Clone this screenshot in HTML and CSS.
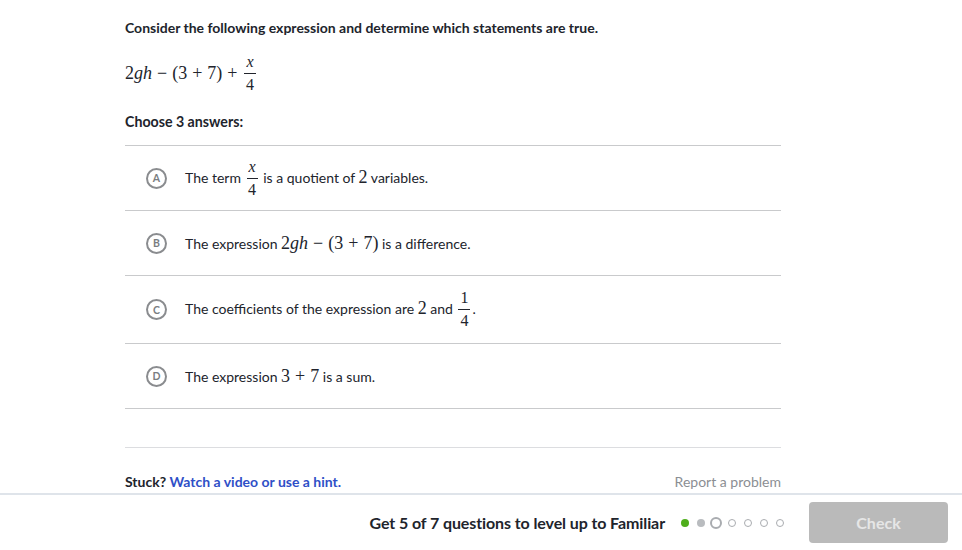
FILE: index.html
```html
<!DOCTYPE html>
<html>
<head>
<meta charset="utf-8">
<link rel="stylesheet" href="styles.css">
</head>
<body>
<main class="page">
  <p class="prompt">Consider the following expression and determine which statements are true.</p>
  <div class="expr math">
    <span>2<i>gh</i></span><span class="op">−</span><span>(3</span><span class="op">+</span><span>7)</span><span class="op">+</span>
    <span class="frac"><span class="num"><i>x</i></span><span class="den">4</span></span>
  </div>
  <p class="choose">Choose 3 answers:</p>
  <ul class="options">
    <li class="option"><span class="badge">A</span><span class="otext">The term <span class="math"><span class="frac sm"><span class="num"><i>x</i></span><span class="den">4</span></span></span> is a quotient of <span class="math">2</span> variables.</span></li>
    <li class="option"><span class="badge">B</span><span class="otext">The expression <span class="math">2<i>gh</i><span class="op">−</span>(3<span class="op">+</span>7)</span> is a difference.</span></li>
    <li class="option tall"><span class="badge">C</span><span class="otext">The coefficients of the expression are <span class="math">2</span> and <span class="math"><span class="frac sm"><span class="num">1</span><span class="den">4</span></span></span>.</span></li>
    <li class="option"><span class="badge">D</span><span class="otext">The expression <span class="math">3<span class="op">+</span>7</span> is a sum.</span></li>
  </ul>
  <div class="spacer"></div>
  <div class="help">
    <span class="stuck">Stuck? <a class="hint" href="#">Watch a video or use a hint.</a></span>
    <a class="report" href="#">Report a problem</a>
  </div>
</main>
<footer class="footer">
  <span class="goal">Get 5 of 7 questions to level up to Familiar</span>
  <span class="dots">
    <span class="dot done"></span>
    <span class="dot wrong"></span>
    <span class="dot current"></span>
    <span class="dot todo"></span>
    <span class="dot todo"></span>
    <span class="dot todo"></span>
    <span class="dot todo"></span>
  </span>
  <button class="check">Check</button>
</footer>
</body>
</html>
```

FILE: styles.css
```css
html, body {
  margin: 0;
  padding: 0;
  background: #ffffff;
}
body {
  font-family: Lato, "Noto Sans", sans-serif;
  color: #21242c;
  width: 962px;
  height: 550px;
  overflow: hidden;
}
.page {
  margin-left: 125px;
  width: 656px;
  padding-top: 18px;
}
.prompt {
  margin: 0;
  font-size: 14px;
  font-weight: 700;
  line-height: 20px;
}
.math {
  font-family: "Liberation Serif", "DejaVu Serif", serif;
  font-size: 18px;
}
.math i {
  font-style: italic;
}
.op {
  margin: 0 5px;
}
.expr {
  margin-top: 16px;
  height: 38px;
  display: flex;
  align-items: center;
}
.frac {
  display: inline-flex;
  flex-direction: column;
  align-items: center;
  vertical-align: middle;
  line-height: 1;
  margin: 0 2px;
}
.frac .num {
  padding: 0 2px 3px;
  border-bottom: 1px solid #21242c;
  font-size: 16px;
}
.frac .den {
  padding-top: 3px;
  font-size: 16px;
}
.choose {
  margin: 20px 0 0;
  font-size: 14.2px;
  font-weight: 700;
  line-height: 20px;
}
.options {
  list-style: none;
  margin: 13px 0 0;
  padding: 0;
  border-top: 1px solid #c9cacc;
}
.option {
  height: 64px;
  display: flex;
  align-items: center;
  border-bottom: 1px solid #c9cacc;
  padding-left: 21px;
}
.option.tall {
  height: 67px;
}
.badge {
  box-sizing: border-box;
  width: 21px;
  height: 21px;
  border: 2px solid #8a8c8f;
  border-radius: 50%;
  display: inline-flex;
  align-items: center;
  justify-content: center;
  font-size: 10.5px;
  font-weight: 700;
  color: #7a7d81;
  flex: none;
}
.otext {
  margin-left: 18px;
  font-size: 14px;
  line-height: 20px;
}
.otext .math {
  font-size: 18px;
}
.spacer {
  height: 38px;
  border-bottom: 1px solid #dcdde0;
}
.help {
  margin-top: 25px;
  display: flex;
  justify-content: space-between;
  align-items: center;
  font-size: 14px;
  line-height: 18px;
}
.stuck {
  font-weight: 700;
}
.hint {
  color: #2f4fc7;
  text-decoration: none;
  font-weight: 700;
}
.report {
  color: #8b8e93;
  text-decoration: none;
}
.footer {
  margin-top: 2px;
  border-top: 2px solid #dfe4ea;
  height: 55px;
  display: flex;
  align-items: center;
  justify-content: flex-end;
  padding-right: 14px;
}
.goal {
  font-size: 16px;
  font-weight: 700;
  color: #21242c;
  letter-spacing: -0.1px;
}
.dots {
  display: flex;
  align-items: center;
  margin-left: 16px;
}
.dot {
  box-sizing: border-box;
  border-radius: 50%;
}
.dot.done {
  width: 8px;
  height: 8px;
  background: #4fae1c;
  margin-right: 8px;
}
.dot.wrong {
  width: 8px;
  height: 8px;
  background: #b9bcbf;
  margin-right: 5px;
}
.dot.current {
  width: 12px;
  height: 12px;
  border: 2px solid #a9acb0;
  margin-right: 6px;
}
.dot.todo {
  width: 8px;
  height: 8px;
  border: 1.5px solid #a9acb0;
  margin-right: 8px;
}
.dot.todo:last-child {
  margin-right: 0;
}
.check {
  margin-left: 25px;
  width: 139px;
  height: 41px;
  border: none;
  border-radius: 4px;
  background: #bababa;
  color: #e6e6e6;
  font-family: Lato, "Noto Sans", sans-serif;
  font-size: 16px;
  font-weight: 700;
}
```
